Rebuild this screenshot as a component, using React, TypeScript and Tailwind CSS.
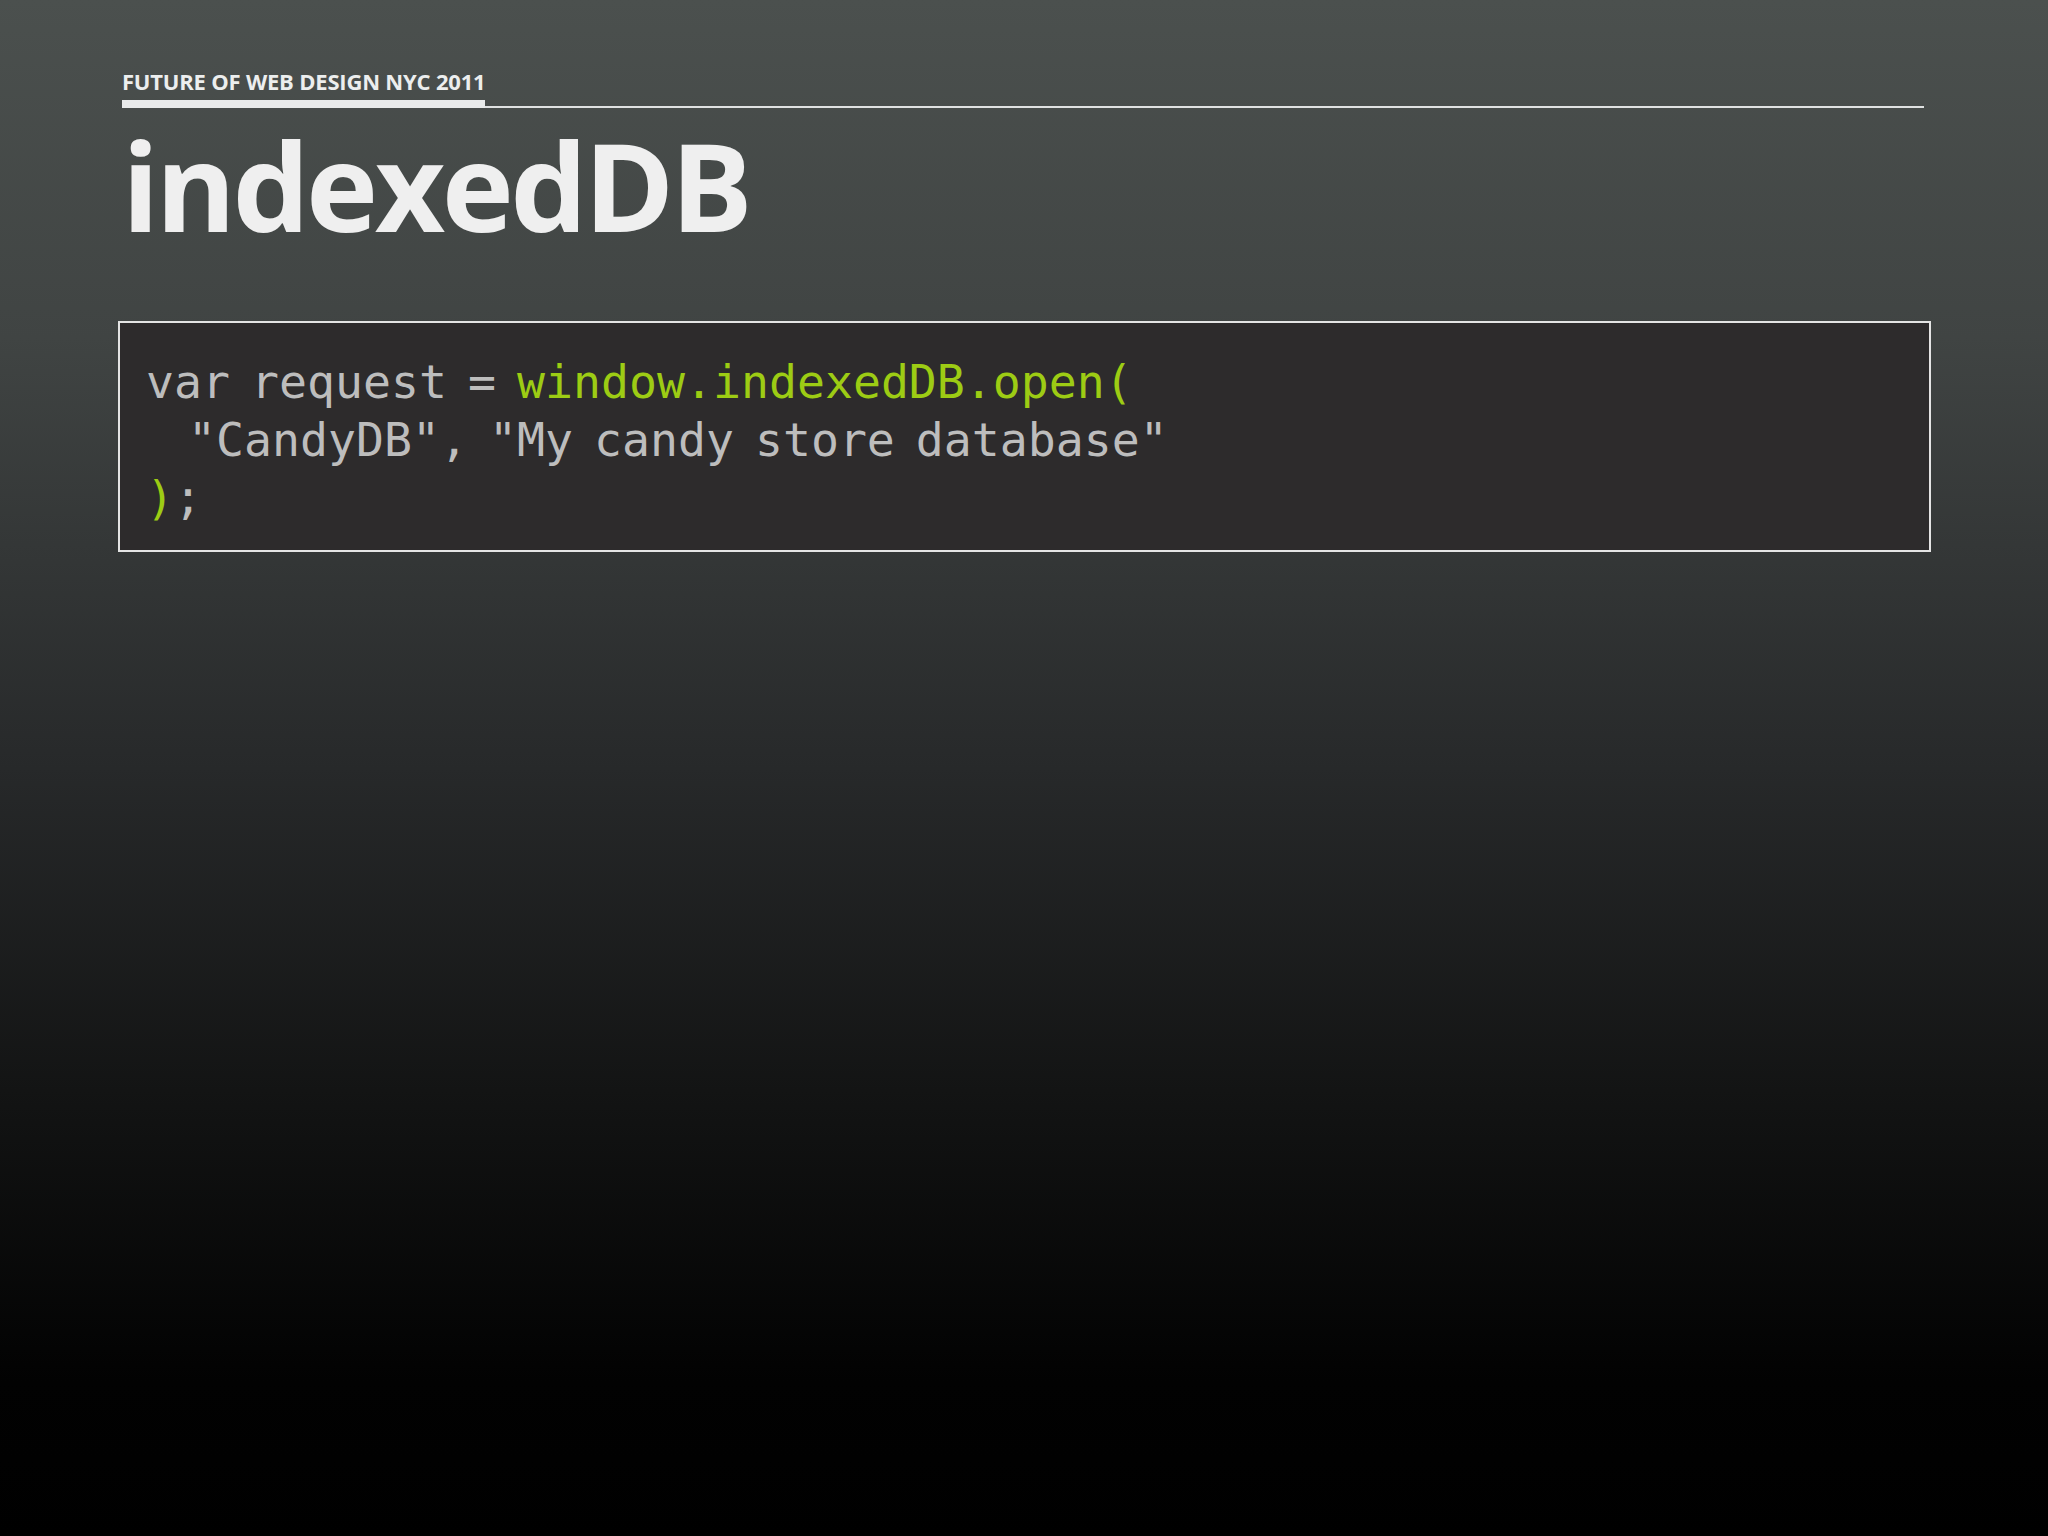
import React from "react";

export default function App() {
  return (
    <div className="w-[2048px] h-[1536px] overflow-hidden bg-[linear-gradient(to_bottom,#4b504e_0%,#404443_22%,#27292a_50%,#121313_72%,#020202_90%,#000000_100%)]">
      <div className="pl-[122px] pr-[124px] pt-[70px]">
        <div className="font-['Open_Sans',sans-serif] font-bold text-[22px] leading-[22px] text-[#eceeee] tracking-[-0.2px]">
          FUTURE OF WEB DESIGN NYC 2011
        </div>
        <div className="mt-[8px] flex items-end">
          <div className="w-[363px] h-[8px] bg-[#e8eaea]" />
          <div className="flex-1 h-[2px] bg-[#dfe1e1]" />
        </div>
        <h1 className="mt-[16px] font-['Open_Sans',sans-serif] font-bold text-[122px] leading-[122px] text-[#efefef] tracking-[-3.5px]">
          indexedDB
        </h1>
        <div className="mt-[75px] ml-[-4px] w-[1813px] border-2 border-[#e4e4e4] bg-[#2d2b2c] pl-[26px] pt-[30px] pb-[23px]">
          <pre className="font-['DejaVu_Sans_Mono',monospace] text-[46.5px] leading-[58px] text-[#bdbdbd] [word-spacing:-7px]">
            <div>
              var request = <span className="text-[#9dcc14]">window.indexedDB.open(</span>
            </div>
            <div>{'  "CandyDB", "My candy store database"'}</div>
            <div>
              <span className="text-[#9dcc14]">)</span>;
            </div>
          </pre>
        </div>
      </div>
    </div>
  );
}
